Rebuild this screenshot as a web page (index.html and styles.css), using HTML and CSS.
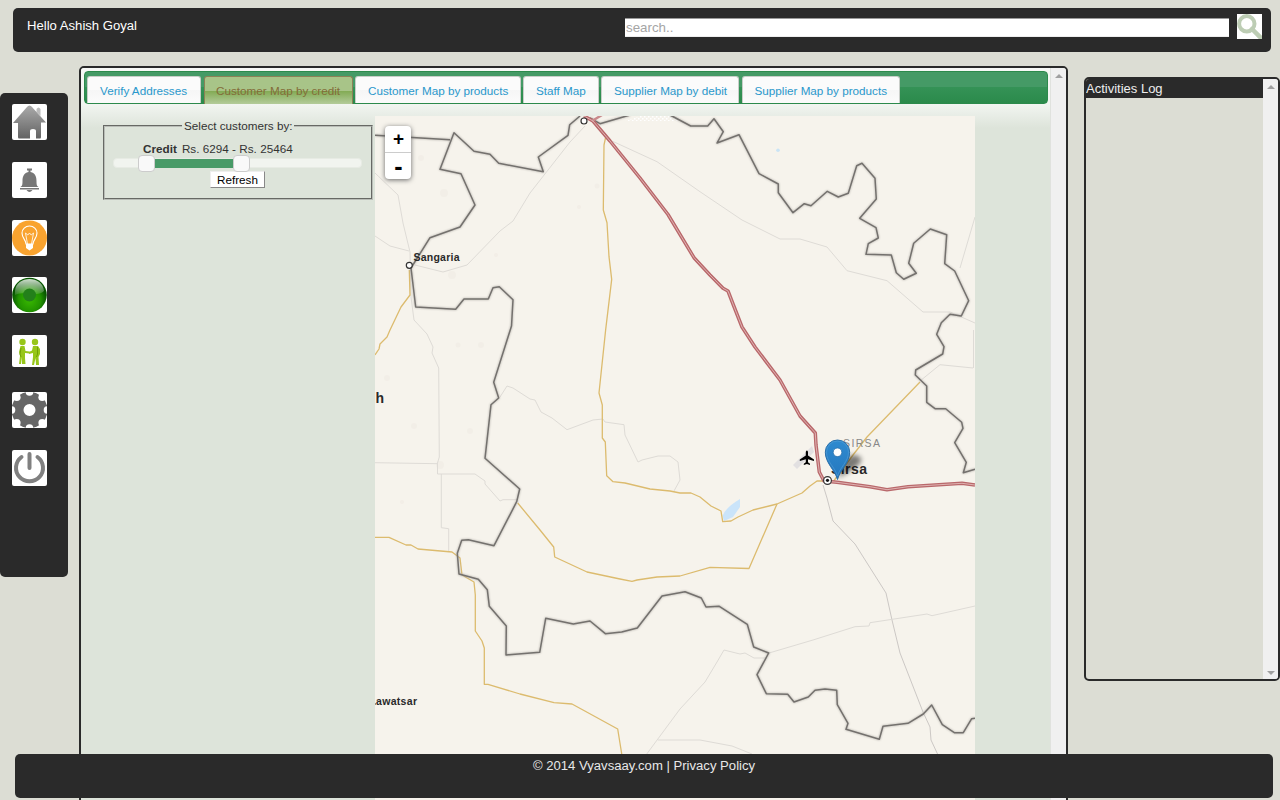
FILE: index.html
```html
<!DOCTYPE html>
<html lang="en">
<head>
<meta charset="utf-8">
<title>Vyavsaay</title>
<link rel="stylesheet" href="styles.css">
</head>
<body>
<header class="topbar">
  <span class="hello">Hello Ashish Goyal</span>
  <input class="search" type="text" placeholder="search..">
  <button class="search-btn" aria-label="Search"><svg width="25" height="25" viewBox="0 0 25 25" fill="none" stroke="#bdcdb4"><circle cx="9.800" cy="9.800" r="7.700" stroke-width="4"/><path d="M15 15l8.500 8.500" stroke-width="4.500" stroke-linecap="round"/></svg></button>
</header>
<div class="layout">
  <nav class="sidebar">
    <a class="tile"><svg viewBox="0 0 35 36"><defs><linearGradient id="hg" x2="0" y2="1"><stop stop-color="#aaa"/><stop offset="1" stop-color="#636363"/></linearGradient></defs><path d="M24.500 5q2-3 4 0v7l-4-4z" fill="#bbb"/><path d="M17.500 1.500Q19 1.500 20 3L34 18.500H29V33Q29 34.500 28 34.500H24V27Q24 25 21 25Q18 25 18 27V34.500H7Q6 34.500 6 33V19H1L15 3Q16 1.500 17.500 1.500Z" fill="url(#hg)"/></svg></a>
    <a class="tile"><svg viewBox="0 0 35 36" fill="#777"><rect x="15" y="6.500" width="5" height="2"/><path d="M16.500 8h2v2c5 1 6 5 6 9 0 4 .5 5 2 6h-18c1.500-1 2-2 2-6 0-4 1-8 6-9z"/><path d="M8 26h19v1.500H8zM14.500 28h6q-3 4-6 0z"/></svg></a>
    <a class="tile"><svg viewBox="0 0 35 36"><circle cx="17.500" cy="18" r="17.500" fill="#f9a32f"/><g fill="none" stroke="#fff" stroke-width="1.100"><path d="M14 24c0-4-4-6-4-11a7.500 7 0 0 1 15 0c0 5-4 7-4 11z"/><path d="M15.500 24L13.500 13l2.300 2 1.700-2 1.700 2 2.300-2-2 11" stroke-width=".8"/></g><path d="M14 24h7v4l-3.500 2.500L14 28z" fill="#fff"/></svg></a>
    <a class="tile tile-green"><svg viewBox="0 0 35 36"><defs><radialGradient id="gg" cy=".65"><stop stop-color="#39b800"/><stop offset=".65" stop-color="#229400"/><stop offset="1" stop-color="#075600"/></radialGradient><linearGradient id="gl" x2="0" y2="1"><stop stop-color="#fff" stop-opacity=".8"/><stop offset="1" stop-color="#fff" stop-opacity=".1"/></linearGradient></defs><circle cx="17.500" cy="18" r="17.300" fill="url(#gg)"/><path d="M3 14C4-2 31-2 32 14Q28 18 17.500 17 8 15 3 18z" fill="url(#gl)"/><circle cx="17.500" cy="18" r="6.500" fill="#23801a"/></svg></a>
    <a class="tile tile-people"><svg viewBox="0 0 35 32"><g fill="#97c61a"><circle cx="10.500" cy="7" r="3.200"/><circle cx="23" cy="7" r="3.200"/><path d="M8.500 11h4l1 5 4 .5v2l-4.500-.5v5l.5 6h-3.500l-.5-7-.5 7H7L8 21 7 17zM21 11h5l2 3v5l-1.500 3 .5 8h-3l-.5-7-1.500 7h-2l1-8v-4l-4 1v-2l3-1.500z"/></g><path d="M9 13l-1 6 1 3M25.500 12v7l-1 3" fill="none" stroke="#669800" stroke-width=".8"/></svg></a>
    <a class="tile"><svg viewBox="0 0 35 36"><circle cx="17.500" cy="18" r="12" fill="none" stroke="#666" stroke-width="12"/><g fill="#fff"><circle cx="17.500" cy="0" r="3.800"/><circle cx="17.500" cy="36" r="3.800"/><circle cx="-.500" cy="18" r="3.800"/><circle cx="35.500" cy="18" r="3.800"/><circle cx="4.800" cy="5.300" r="3.800"/><circle cx="30.200" cy="5.300" r="3.800"/><circle cx="4.800" cy="30.700" r="3.800"/><circle cx="30.200" cy="30.700" r="3.800"/></g></svg></a>
    <a class="tile"><svg viewBox="0 0 35 36" fill="none" stroke="#808080" stroke-width="4" stroke-linecap="round"><path d="M9.500 7A13.500 13.500 0 1 0 25.500 7M17.500 4v14"/></svg></a>
  </nav>
  <main class="panel">
    <div class="content">
      <ul class="tabs">
        <li class="tab t1">Verify Addresses</li><li class="tab t2 active">Customer Map by credit</li><li class="tab t3">Customer Map by products</li><li class="tab t4">Staff Map</li><li class="tab t5">Supplier Map by debit</li><li class="tab t6">Supplier Map by products</li>
      </ul>
      <div class="workspace">
        <fieldset class="filter">
          <legend>Select customers by:</legend>
          <div class="credit"><b>Credit</b><span>Rs. 6294 - Rs. 25464</span></div>
          <div class="slider"><i class="range"></i><i class="handle low"></i><i class="handle high"></i></div>
          <button class="refresh">Refresh</button>
        </fieldset>
        <div class="map">
          <svg width="600" height="684" viewBox="375 116 600 684">
            <defs>
              <linearGradient id="pin" x2="0" y2="1"><stop stop-color="#2f8bd0"/><stop offset="1" stop-color="#2477be"/></linearGradient>
              <filter id="soft" x="-50%" y="-50%" width="200%" height="200%"><feGaussianBlur stdDeviation="2.500"/></filter>
              <pattern id="dots" width="4" height="4" patternUnits="userSpaceOnUse"><path d="M0 0h1.500v1.500H0zM2 2h1.500v1.500H2z" fill="#fff"/></pattern>
            </defs>
            <path d="M625 121L640 116H672L678 121Z" fill="url(#dots)"/>
            <g fill="#f2eee7"><circle cx="421" cy="158" r="3"/><circle cx="444" cy="193" r="4"/><circle cx="452" cy="275" r="4"/><circle cx="496" cy="255" r="2"/><circle cx="579" cy="207" r="2"/><circle cx="597" cy="186" r="2.500"/><circle cx="458" cy="345" r="2.500"/><circle cx="481" cy="345" r="3"/><circle cx="387" cy="378" r="3"/><circle cx="414" cy="426" r="3"/><circle cx="470" cy="431" r="3"/><circle cx="440" cy="465" r="4"/><circle cx="402" cy="502" r="2"/></g>
            <g class="minor">
              <path d="M375 173L398 195L403 223L410 252L411 297L414 320L427 334L433 347L432 353L438.700 368L439.300 457L437.500 463V474H475L485 481V484L500 501L503 499.700H517"/>
              <path d="M375 462.700L437 463.700M441.300 474V527.700L448.700 528.700V551M375 236L390 246L409 251"/>
              <path d="M415 265L443 272L467 265L500 231L513 221L530 193L570 142L585 126"/>
              <path d="M612 141L657 161.700L700 191.700L742 220L780 239H800L827 247L847 270.700L887 280.700L923 312H950L975 323M975 217L960 268"/>
              <path d="M500 397L507 386L513 388L530 399L535 400L541 412L552 418L567 429.700L593 420L603 419L605 422L624 424.700L625 435L638 462L642 460L658 456L670 456L678 462L680 480L674 491"/>
              <path d="M920 381L940 364.700L973 368M973.500 330V368"/>
              <path d="M823 485L827 498L833 521L855 544L886 593L892 620L900 653L923 712L930 727L931 740L938 755" stroke="#ccc8c5"/>
              <path d="M975 606L932 615.700L927 614L870 622.700L869 626L855 626.700L813 640L769 653M767 658H754L745 653L740 654L724 650L717 662L705 682L680 709L646 755M658 740H700L732 746L752 754"/>
            </g>
            <path d="M722.500 516Q725 508 740 499V507L733 517L724 521Z" fill="#cae4fa"/><circle cx="778" cy="150.300" r="1.800" fill="#cae4f5"/>
            <path d="M793 465L812 446L814 452L797 469Z" fill="#e2e0e1"/>
            <g class="road">
              <path d="M605.500 138L604 145L603.300 210L607 222.700L609 256.700L611.700 279.300L605.700 329.300L599 393L602.300 405V438L605.300 442L606.700 475.700L613 481.700L625 483L650 489L670 491L680 493L691 493L700 497L711 506L721 511L722.700 521.700L731 521L738 517L753 510L777 504L802 493L810 486L817 481H826"/>
              <path d="M777 504L749 568.500L710 567.300L680 576L657 577L637 580L632 581.300L620 579L587 572L554.700 557L553.700 547L540 530L517.700 503M833 482L853 455L867 437L920 382"/>
              <path d="M409.300 270L410 295L401 307L390 330L387 337L380 344L379 349L375 355M375 537.300H389L406 545H411L418 549L452 552L460 558L462 575L474 582L475.300 595V631L482 641L484.300 648V684.300H488L520 694L554 702.700L572 704L583 710L617.700 729L622.700 760"/>
            </g>
            <g class="border">
              <path d="M375 135.300L450 139.700M411 268L430 237.700L460 227L475 205L461 173.700L440 169.300L454 132.700L474 151.300L490 154.300L498.700 163.300L543.300 171.700L538.300 157L568 135.300L569.700 124.700L580 116M590 118L600 123.700L630 115"/>
              <path d="M411 268L415.700 307L455.700 309.300L464 299H488.300L493 287.700L499.300 286.700L513 299.700L511.500 326L493.700 382.300L498.700 398L491 404.700L485 458.300L519.700 489L516.700 501.700L494 545.700L468.300 539.700L461.700 540.300L457.300 553.300L459 574L478.300 579.300L487.300 589.700L489.300 606.300L506.300 626L506 655L539.700 652.300L545.700 618.300L573.300 624L590 621L605.300 633.700L621.700 632L637.300 628L662 596L685 591.700L701.300 598L706 607L719.300 606.300L747.300 624.300L753.700 647L768.700 653L757 674.700L766.300 693.700L787.700 694.300L794 702L808.300 697L815 690.300L825 689L836.700 690.300L837.300 704.700L848 723.300L846 729.300L879.300 739.300L883 726.300L908 723.300L923.300 714L931.700 705L942.300 724.700L954.300 732.700H963.300L971.700 718.700L975 718.300"/>
              <path d="M670 115L690.700 126H707.700L714 118.700L723.300 131.700L717 143L739 134.700L759 173.700L778.300 184V192.700L793 212.700L804.300 203.700L811 205.700L827.300 191.300L838.300 197L848.300 193.300L856.700 165.700L862 163.300L875 178.300L876.300 199L859.700 218.300L876 227.700L878.300 238L868.300 243.700L866 254.300L891.300 255L896.300 272.700L903.700 279.300L916.300 273.300L908.700 263.300L913.700 243.300L930.300 229L946.700 234.700L944.700 263.700L954.700 271L968.700 300.700L961.300 316L950 314.300L941.300 322.700L936.700 334.300L944 346.700L942.700 354L915.700 370L915.300 375L926.700 386V402.300L935 408.700H945.700L961.700 422.300L963 428.300L954.700 442.700L966.300 462.300L963.300 472.700L975 469.300"/>
            </g>
            <g fill="none" stroke-linejoin="round">
              <path d="M584 116L593 121L610 141L640 178L668 214.500L694 257.700L710 275L723 288.300L728 291L733 304L742 327L755 347L780 380L800 416L815.300 433L816 445L819.300 472L824 481L837 482.300L870 486.700L887 489.700L908 486.700L962 483.300L975 485" stroke="#b9686b" stroke-width="3.500"/>
              <path d="M592 121L602 115" stroke="#c98a8c" stroke-width="2.500"/>
              <path d="M584 116L593 121L610 141L640 178L668 214.500L694 257.700L710 275L723 288.300L728 291L733 304L742 327L755 347L780 380L800 416L815.300 433L816 445L819.300 472L824 481L837 482.300L870 486.700L887 489.700L908 486.700L962 483.300L975 485" stroke="#dfb3b2" stroke-width="1"/>
            </g>
            <g fill="#fff" stroke="#333" stroke-width="1.200"><circle cx="584" cy="121" r="3"/><circle cx="409.300" cy="265.300" r="3"/><circle cx="827.500" cy="480.500" r="3.900"/></g><circle cx="827.500" cy="480.300" r="1.600" fill="#111"/>
            <g class="labels">
              <text x="413.500" y="260.500" font-size="10.500" textLength="46">Sangaria</text>
              <text x="375.500" y="403" font-size="14">h</text>
              <text x="376" y="705" font-size="10.500" textLength="41">awatsar</text><path d="M375 703.500h1v1h-1z"/>
              <text x="831" y="474" font-size="14" textLength="36">Sirsa</text>
              <text x="843" y="447" font-size="10.500" textLength="37" class="district">SIRSA</text>
            </g>
            <path d="M806.900 450.500c.8 0 1.100 1 1.100 2v3l6 4v1.600l-6-1.900v3l2 1.500v1.200l-3.100-.8-3.100.8v-1.200l2-1.500v-3l-6 1.900v-1.600l6-4v-3c0-1 .3-2 1.100-2z"/>
            <path d="M838 478L845 460Q853 451 861 458Q863 463 850 471Z" opacity=".5" filter="url(#soft)"/>
            <path d="M837.500 479.500C835 470 825.300 463 825.300 452.200A12.200 12.200 0 0 1 849.700 452.200C849.700 463 840 470 837.500 479.500Z" fill="url(#pin)" stroke="#2a6fa9"/><path d="M837.500 476C835 467 826.500 462 826.500 452A11 11 0 0 1 848.500 452C848.500 462 840 467 837.500 476Z" fill="none" stroke="#5ba3da" stroke-opacity=".5"/><circle cx="837.500" cy="452.300" r="4.300" fill="#fff" stroke="#2a70aa" stroke-width=".8"/>
          </svg>
          <div class="zoom"><span>+</span><span>-</span></div>
        </div>
      </div>
    </div>
    <div class="scroll"><i class="up"></i></div>
  </main>
  <aside class="log">
    <div class="log-body"><h2>Activities Log</h2></div>
    <div class="scroll"><i class="up"></i><i class="down"></i></div>
  </aside>
</div>
<footer class="footer">© 2014 Vyavsaay.com | Privacy Policy</footer>
</body>
</html>
```
FILE: styles.css
```css
* { box-sizing: border-box; }
body { margin: 0; height: 800px; overflow: hidden; position: relative; background: #dcddd4; font: 13.12px "Liberation Sans", Arial, sans-serif; color: #333; display: flow-root; }
.topbar { height: 44px; margin: 8px 9px 0 13px; background: #2a2a2a; border-radius: 5px; display: flex; align-items: flex-start; padding: 6px 9px 0 14px; }
.hello { color: #fff; margin-top: 4px; line-height: 16px; }
.search { width: 604px; height: 19px; margin: 4px 8px 0 auto; padding: 0 0 0 1px; border: 1px solid #eee; border-top-color: #999; border-left: 0; border-right: 0; font: 13.333px "Liberation Sans", Arial, sans-serif; }
.search::placeholder { color: #a5a5a5; opacity: 1; }
.search-btn { width: 25px; height: 25px; padding: 0; border: 0; background: #fff; }
.search-btn svg { display: block; }
.layout { display: flex; align-items: flex-start; }
.sidebar { width: 68px; height: 484px; margin-top: 41px; background: #2a2a2a; border-radius: 5px; padding: 11px 0 0 12px; display: flex; flex-direction: column; gap: 22px; flex: none; }
.tile { width: 35px; height: 36px; background: #fff; border-radius: 2px; overflow: hidden; flex: none; }
.tile svg { display: block; width: 100%; height: 100%; }
.tile-green { margin-top: -1px; }
.tile-people { height: 32px; margin-bottom: 3px; }
.panel { width: 989px; height: 760px; margin: 14px 0 0 11px; border: 2px solid #2a2a2a; border-radius: 5px; display: flex; overflow: hidden; flex: none; background: #dde4da; }
.content { width: 969px; padding: 3px 2px 0 3px; background: linear-gradient(#f7f8f6, #f2f5f1 36px, #dde4da 60px); flex: none; font-size: 11.7px; }
.tabs { height: 33px; margin: 0; padding: 4px 0 0 2px; list-style: none; display: flex; border: 1px solid #2c8a4c; border-radius: 4px; background: linear-gradient(#459a66 0 50%, #349256 50%, #2b8a4b); }
.tab { height: 27px; border: 1px solid #c9cec9; border-bottom: 0; border-radius: 3px 3px 0 0; background: linear-gradient(#fbfbfb 0 50%, #f6f6f6 50%, #fbfbfb); color: #2a98cc; line-height: 28px; padding-left: 12px; white-space: nowrap; }
.t1 { width: 114px; margin-right: 3px; }
.t2 { width: 149px; margin-right: 2px; padding-left: 11px; }
.t3 { width: 166px; margin-right: 2px; }
.t4 { width: 76px; margin-right: 2px; }
.t5 { width: 138px; margin-right: 3px; }
.t6 { width: 158px; padding-left: 11.5px; }
.active { height: 28px; color: #836c38; border-color: #8d8157; background: linear-gradient(#a8c488 0 50%, #80a951 50%, #b3cb9a); }
.workspace { display: flex; padding: 12px 0 0 19px; align-items: flex-start; }
.filter { width: 270px; height: 82px; margin: 2px 2px 0 0; padding: 0 9px; border: 2px solid #6d706c; border-right-color: #6d706c; border-bottom-color: #6d706c; border-style: groove; border-color: #b9bdb7; min-width: 0; flex: none; display: flow-root; }
.filter legend { margin-left: 68px; padding: 0 2px; line-height: 15px; }
.credit { display: flex; gap: 5px; margin: 8px 0 0 29px; line-height: 16px; letter-spacing: .02px; }
.slider { position: relative; height: 10px; width: 249px; margin-top: 1px; margin-left: -1px; background: #f1f4ef; border: 1px solid #e7ebe4; border-radius: 4px; }
.range { position: absolute; left: 32px; width: 95px; top: 0; height: 9px; background: #489a67; }
.handle { position: absolute; top: -4px; width: 17px; height: 17px; border: 1px solid #ccc; border-radius: 4px; background: #f9f9f9; }
.low { left: 24px; }
.high { left: 119px; }
.refresh { display: block; width: 55px; height: 17px; margin: 3px 0 0 96px; padding: 0; border: 1px solid #eee; border-right-color: #888; border-bottom-color: #888; background: #fff; font: 11.7px/14px "Liberation Sans", Arial, sans-serif; color: #000; }
.map { width: 600px; height: 684px; position: relative; background: #f6f3ec; flex: none; }
.map > svg { display: block; }
.minor { fill: none; stroke: #dedbd6; stroke-width: 1; }
.road { fill: none; stroke: #dcbb6e; stroke-width: 1.3; stroke-linejoin: round; }
.border { fill: none; stroke: #74716e; stroke-width: 1.5; stroke-linejoin: round; filter: drop-shadow(0 0 1px #aaa6a0); }
.labels { font-family: "Liberation Sans", Arial, sans-serif; font-weight: bold; fill: #292929; }
.labels .district { font-weight: normal; fill: #888; }
.zoom { position: absolute; left: 10px; top: 10px; width: 26px; height: 53px; border-radius: 4px; background: #fff; box-shadow: 0 1px 5px #666; color: #000; font: bold 18px/26px "Liberation Sans", Arial, sans-serif; text-align: center; padding-left: 1px; }
.zoom span { display: block; height: 27px; margin-left: -1px; padding-left: 1px; border-bottom: 1px solid #ccc; font-size: 19px; }
.zoom span + span { border: 0; font-size: 25px; }
.scroll { width: 16px; background: #f0f0f0; display: flex; flex-direction: column; align-items: center; justify-content: space-between; padding: 6px 0 4px; border-left: 1px solid #e0e2de; flex: none; }
.up, .down { border: 4px solid transparent; border-top: 0; border-bottom-color: #a0a0a0; }
.down { border-top: 4px solid #a0a0a0; border-bottom: 0; }
.log { width: 196px; height: 604px; margin: 25px 0 0 16px; border: 2px solid #2a2a2a; border-radius: 5px; display: flex; overflow: hidden; flex: none; }
.log-body { flex: 1; }
.log .scroll { width: 15px; border-left: 0; }
.log h2 { margin: 0; height: 19px; background: #2a2a2a; color: #eee; font-weight: normal; font-size: 13px; line-height: 19px; }
.footer { position: absolute; left: 15px; top: 754px; width: 1258px; height: 44px; background: #2a2a2a; border-radius: 5px; color: #e8e8e8; text-align: center; line-height: 24px; }
```
